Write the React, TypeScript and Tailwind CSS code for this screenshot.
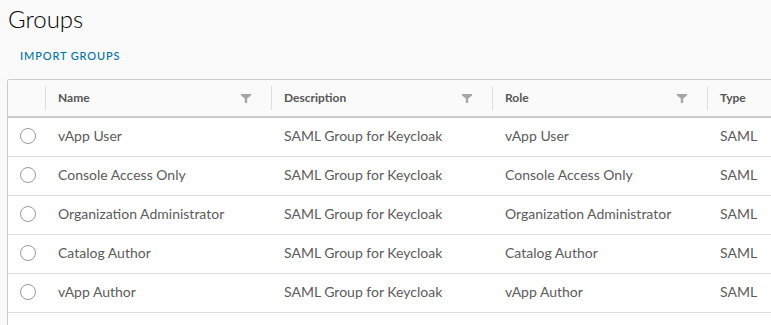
import React from 'react';

const rows = [
    { name: 'vApp User', description: 'SAML Group for Keycloak', role: 'vApp User', type: 'SAML' },
    { name: 'Console Access Only', description: 'SAML Group for Keycloak', role: 'Console Access Only', type: 'SAML' },
    { name: 'Organization Administrator', description: 'SAML Group for Keycloak', role: 'Organization Administrator', type: 'SAML' },
    { name: 'Catalog Author', description: 'SAML Group for Keycloak', role: 'Catalog Author', type: 'SAML' },
    { name: 'vApp Author', description: 'SAML Group for Keycloak', role: 'vApp Author', type: 'SAML' },
];

const columns = [
    { label: 'Name', filter: true },
    { label: 'Description', filter: true },
    { label: 'Role', filter: true },
    { label: 'Type', filter: false },
];

function FilterIcon() {
    return (
        <svg width="10" height="9" viewBox="0 0 10 9" className="shrink-0">
            <path d="M0 0 H10 V1.5 L6.2 4.5 V9 H3.8 V4.5 L0 1.5 Z" fill="#a6a6a6" />
        </svg>
    );
}

const gridCols = 'grid grid-cols-[37px_226px_221px_215px_1fr]';

export default function App() {
    return (
        <div className="w-[771px] h-[325px] overflow-hidden bg-[#fafafa] font-['Lato',sans-serif] text-[#565656]">
            <h1 className="pl-2 pt-[3px] text-[24px] leading-[32px] font-light text-[#000]">Groups</h1>
            <div className="pl-5 pt-[7px] h-[44px]">
                <button className="text-[11px] leading-[13px] font-medium tracking-[0.08em] text-[#0072a3]">IMPORT GROUPS</button>
            </div>
            <div className="ml-[7px] w-[840px] border-l border-t border-[#cccccc] rounded-tl-[3px] bg-white">
                <div className={`${gridCols} h-[38px] bg-[#fafafa] border-b-2 border-[#cccccc]`}>
                    <div />
                    {columns.map((col) => (
                        <div key={col.label} className="flex items-center">
                            <div className="h-6 w-px bg-[#dddddd]" />
                            <span className="pl-3 text-[12px] font-bold text-[#565656] grow">{col.label}</span>
                            {col.filter && (
                                <span className="pr-5">
                                    <FilterIcon />
                                </span>
                            )}
                        </div>
                    ))}
                </div>
                {rows.map((row, i) => (
                    <div key={i} className={`${gridCols} h-[39px] pb-[3px] border-b border-[#dddddd] items-center text-[14px] text-[#5b5b5b]`}>
                        <div className="pl-[12px]">
                            <div className="w-4 h-4 rounded-full border border-[#9a9a9a] bg-white" />
                        </div>
                        <div className="pl-[13px]">{row.name}</div>
                        <div className="pl-[13px]">{row.description}</div>
                        <div className="pl-[13px]">{row.role}</div>
                        <div className="pl-[13px]">{row.type}</div>
                    </div>
                ))}
                <div className="h-[20px]" />
            </div>
        </div>
    );
}
